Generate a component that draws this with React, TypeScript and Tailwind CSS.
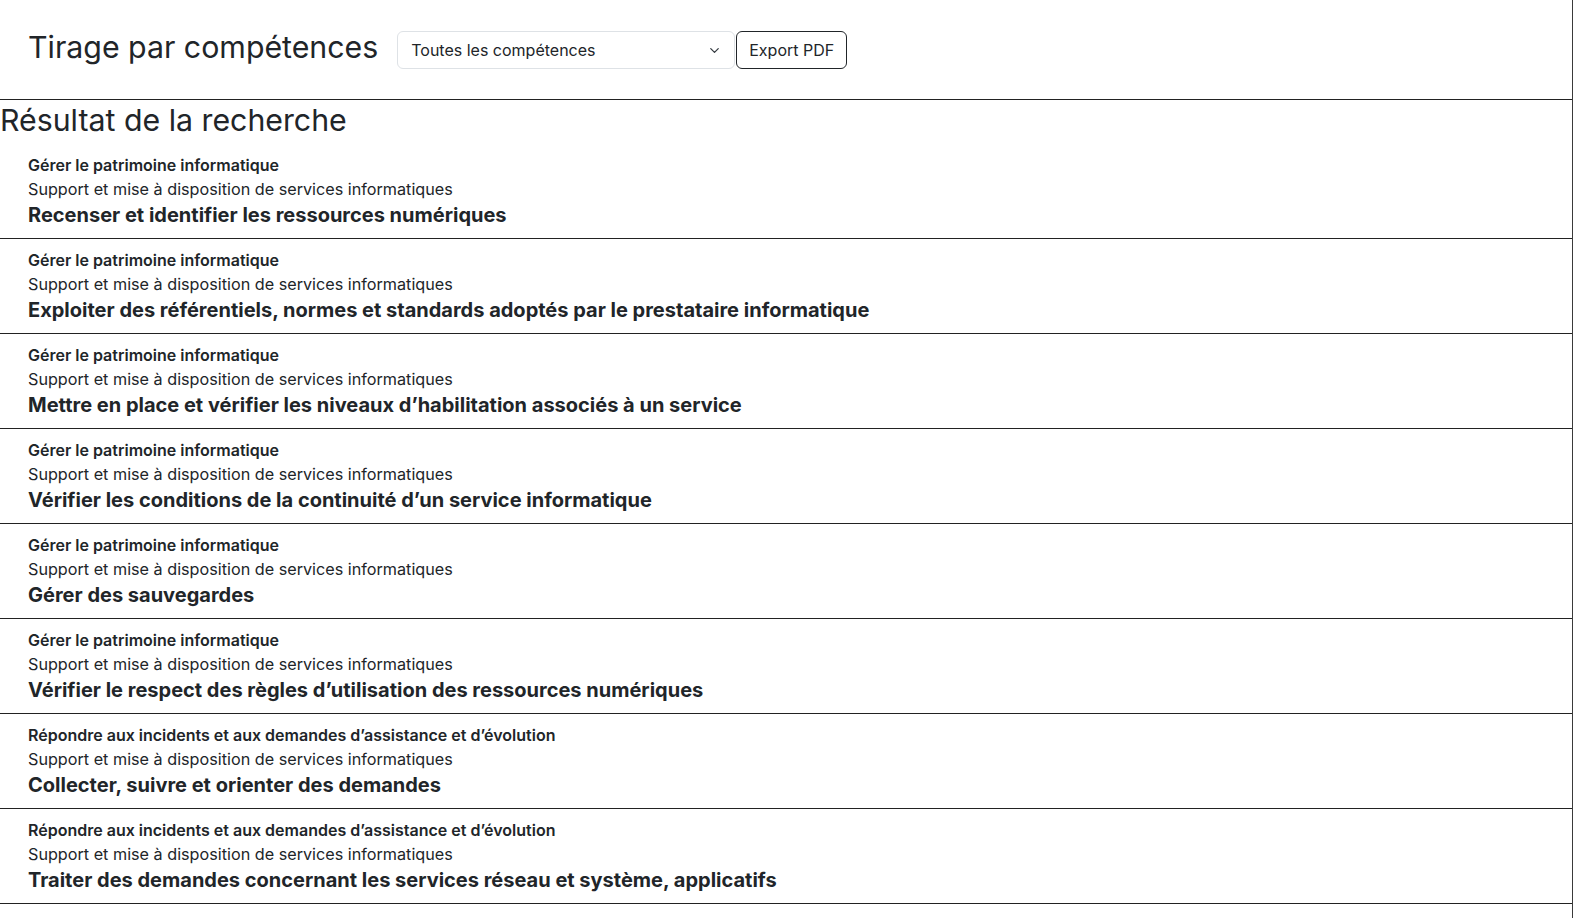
import { ChevronDown } from 'lucide-react';

const rows = [
  ['Gérer le patrimoine informatique', 'Recenser et identifier les ressources numériques'],
  ['Gérer le patrimoine informatique', 'Exploiter des référentiels, normes et standards adoptés par le prestataire informatique'],
  ['Gérer le patrimoine informatique', 'Mettre en place et vérifier les niveaux d’habilitation associés à un service'],
  ['Gérer le patrimoine informatique', 'Vérifier les conditions de la continuité d’un service informatique'],
  ['Gérer le patrimoine informatique', 'Gérer des sauvegardes'],
  ['Gérer le patrimoine informatique', 'Vérifier le respect des règles d’utilisation des ressources numériques'],
  ['Répondre aux incidents et aux demandes d’assistance et d’évolution', 'Collecter, suivre et orienter des demandes'],
  ['Répondre aux incidents et aux demandes d’assistance et d’évolution', 'Traiter des demandes concernant les services réseau et système, applicatifs'],
  ['Répondre aux incidents et aux demandes d’assistance et d’évolution', 'Traiter des demandes concernant les applications'],
];

export default function App() {
  return (
    <div className="min-h-screen bg-white text-[#212529] border-r border-[#3a3a3a] font-['Inter',sans-serif]">
      <div className="flex items-center gap-[1px] pl-[28px] pt-[31px] pb-[30px] border-b border-[#222]">
        <h1 className="text-[30.3px] leading-[32px] mr-[18px] mb-[6px]">Tirage par compétences</h1>
        <div className="flex items-center justify-between w-[338px] h-[38px] pl-[13px] pr-[12px] border border-[#dee2e6] rounded-[6px] text-[16px]">
          <span>Toutes les compétences</span>
          <ChevronDown size={15} strokeWidth={2} className="text-[#343a40]" />
        </div>
        <button className="h-[38px] px-[12px] border border-[#212529] rounded-[6px] text-[16px]">Export PDF</button>
      </div>
      <h2 className="text-[30.3px] leading-[40px] pb-[4px]">Résultat de la recherche</h2>
      {rows.map(([label, title], i) => (
        <div key={i} className="pl-[28px] pb-[9px] pt-[9px] border-b border-[#222]">
          <div className="text-[16px] leading-[24px] font-semibold">{label}</div>
          <div className="text-[16.2px] leading-[24px]">Support et mise à disposition de services informatiques</div>
          <div className="text-[20px] leading-[28px] font-bold">{title}</div>
        </div>
      ))}
    </div>
  );
}
